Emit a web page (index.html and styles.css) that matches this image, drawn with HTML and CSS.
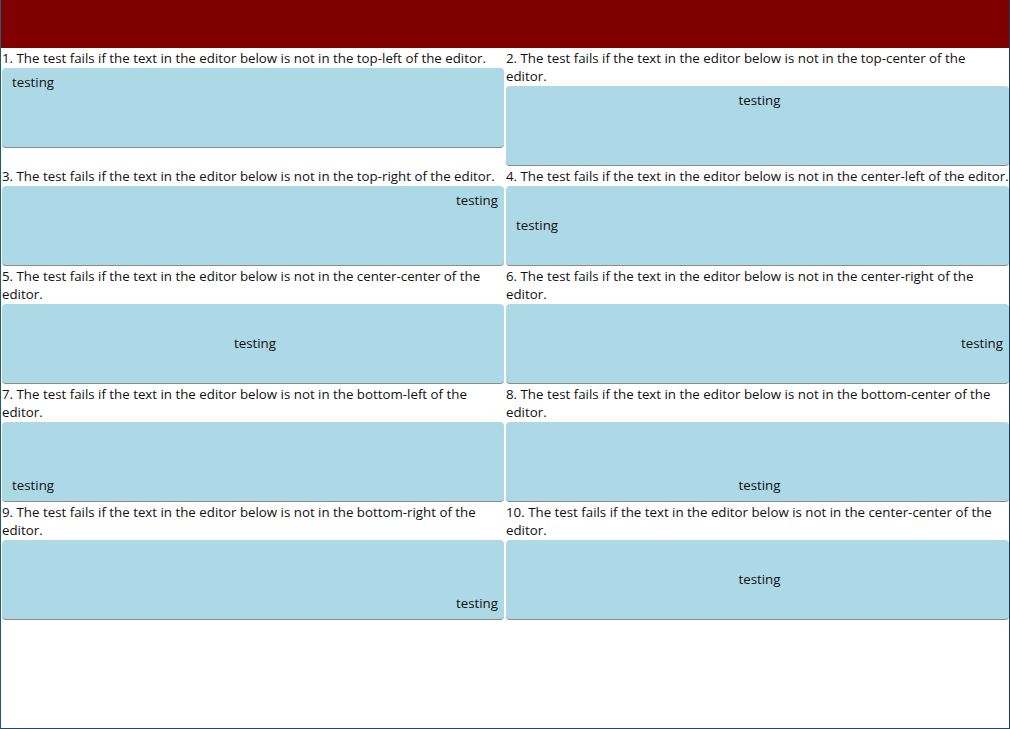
FILE: index.html
```html
<!DOCTYPE html>
<html>
<head>
<meta charset="utf-8">
<link rel="stylesheet" href="styles.css">
</head>
<body>
<div class="window">
  <div class="header"></div>
  <div class="grid">
    <div class="cell">
      <div class="label">1. The test fails if the text in the editor below is not in the top-left of the editor.</div>
      <div class="editor top left"><span>testing</span></div>
    </div>
    <div class="cell">
      <div class="label">2. The test fails if the text in the editor below is not in the top-center of the<br>editor.</div>
      <div class="editor top center"><span>testing</span></div>
    </div>
    <div class="cell">
      <div class="label">3. The test fails if the text in the editor below is not in the top-right of the editor.</div>
      <div class="editor top right"><span>testing</span></div>
    </div>
    <div class="cell">
      <div class="label">4. The test fails if the text in the editor below is not in the center-left of the editor.</div>
      <div class="editor middle left"><span>testing</span></div>
    </div>
    <div class="cell">
      <div class="label">5. The test fails if the text in the editor below is not in the center-center of the editor.</div>
      <div class="editor middle center"><span>testing</span></div>
    </div>
    <div class="cell">
      <div class="label">6. The test fails if the text in the editor below is not in the center-right of the editor.</div>
      <div class="editor middle right"><span>testing</span></div>
    </div>
    <div class="cell">
      <div class="label">7. The test fails if the text in the editor below is not in the bottom-left of the editor.</div>
      <div class="editor bottom left"><span>testing</span></div>
    </div>
    <div class="cell">
      <div class="label">8. The test fails if the text in the editor below is not in the bottom-center of the editor.</div>
      <div class="editor bottom center"><span>testing</span></div>
    </div>
    <div class="cell">
      <div class="label">9. The test fails if the text in the editor below is not in the bottom-right of the editor.</div>
      <div class="editor bottom right"><span>testing</span></div>
    </div>
    <div class="cell">
      <div class="label">10. The test fails if the text in the editor below is not in the center-center of the editor.</div>
      <div class="editor middle center"><span>testing</span></div>
    </div>
  </div>
</div>
</body>
</html>
```

FILE: styles.css
```css
html, body {
  margin: 0;
  padding: 0;
  background: #ffffff;
}
body {
  font-family: "Open Sans", "Noto Sans", sans-serif;
  font-size: 13.3px;
  color: #111111;
}
.window {
  width: 1010px;
  height: 729px;
  box-sizing: border-box;
  border-left: 1px solid #1d5f73;
  border-right: 1px solid #1d3b5e;
  border-bottom: 1px solid #1d4a66;
  overflow: hidden;
}
.header {
  height: 48px;
  background: #800000;
}
.grid {
  display: grid;
  grid-template-columns: 502px 503px;
  column-gap: 2px;
  padding-left: 1px;
  align-items: start;
}
.cell {
  display: flex;
  flex-direction: column;
  min-width: 0;
}
.label {
  line-height: 18px;
  padding-top: 1px;
  margin-right: -3px;
}
.editor {
  display: flex;
  height: 80px;
  margin-top: 1px;
  padding: 4px 6px 6px 10px;
  box-sizing: border-box;
  background: #add8e6;
  border-radius: 4px;
  border-bottom: 1px solid #8c8c8c;
  line-height: 20px;
}
.editor.top { align-items: flex-start; }
.editor.middle { align-items: center; }
.editor.bottom { align-items: flex-end; }
.editor.left { justify-content: flex-start; }
.editor.center { justify-content: center; }
.editor.right { justify-content: flex-end; }
```
